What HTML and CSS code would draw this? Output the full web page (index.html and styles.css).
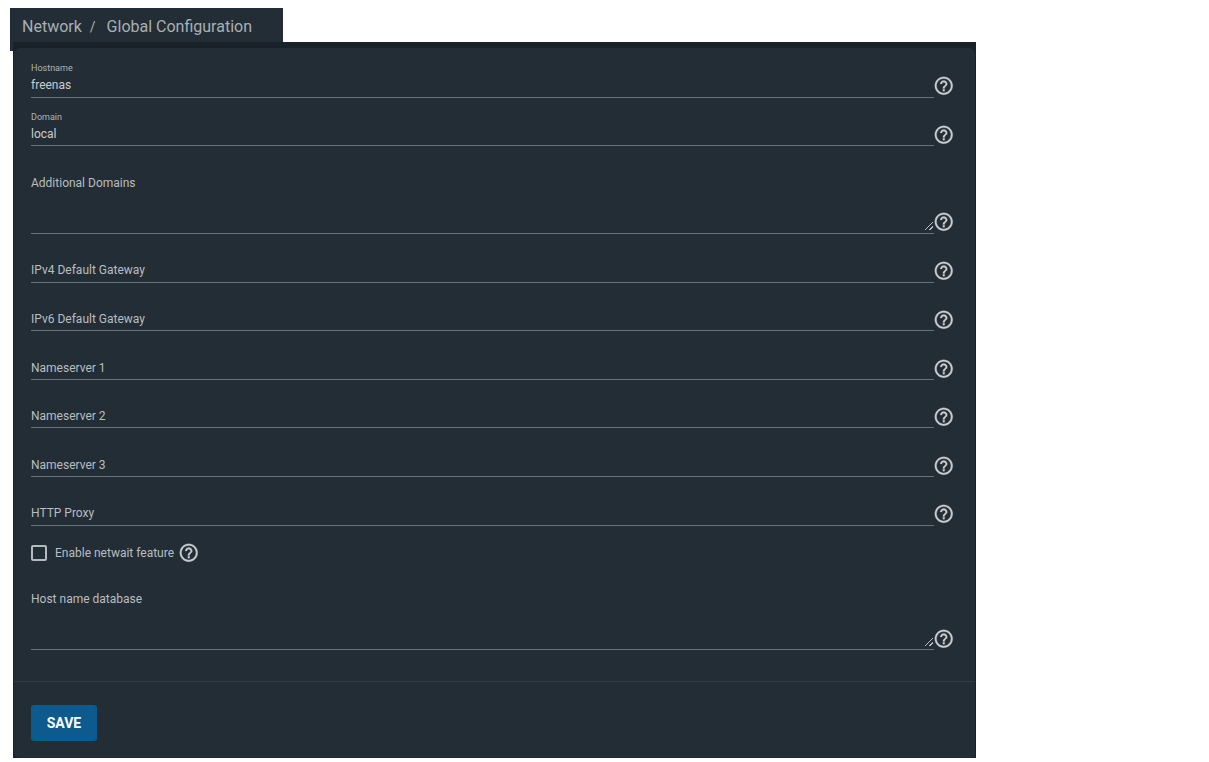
FILE: index.html
```html
<!DOCTYPE html>
<html lang="en">
<head>
<meta charset="utf-8">
<title>Global Configuration</title>
<link rel="stylesheet" href="styles.css">
</head>
<body>
<svg class="sprite" width="0" height="0" aria-hidden="true">
  <symbol id="help" viewBox="0 0 24 24"><path d="M11 18h2v-2h-2v2zm1-16C6.48 2 2 6.48 2 12s4.48 10 10 10 10-4.48 10-10S17.52 2 12 2zm0 18c-4.41 0-8-3.59-8-8s3.59-8 8-8 8 3.59 8 8-3.59 8-8 8zm0-14c-2.21 0-4 1.79-4 4h2c0-1.1.9-2 2-2s2 .9 2 2c0 2-3 1.75-3 5h2c0-2.25 3-2.5 3-5 0-2.21-1.79-4-4-4z"/></symbol>
</svg>
<nav class="crumbs"><span>Network</span><span class="sep">/</span><span>Global Configuration</span></nav>
<main class="shell">
  <form class="card">
    <div class="fields">
      <div class="row row-first">
        <div class="control"><div class="float">Hostname</div><div class="value">freenas</div></div>
        <svg class="help"><use href="#help"/></svg>
      </div>
      <div class="row row-second">
        <div class="control"><div class="float">Domain</div><div class="value">local</div></div>
        <svg class="help"><use href="#help"/></svg>
      </div>
      <div class="row row-area">
        <div class="control"><div class="label">Additional Domains</div><textarea class="area"></textarea></div>
        <svg class="help"><use href="#help"/></svg>
      </div>
      <div class="row"><div class="control"><div class="label">IPv4 Default Gateway</div></div><svg class="help"><use href="#help"/></svg></div>
      <div class="row"><div class="control"><div class="label">IPv6 Default Gateway</div></div><svg class="help"><use href="#help"/></svg></div>
      <div class="row"><div class="control"><div class="label">Nameserver 1</div></div><svg class="help"><use href="#help"/></svg></div>
      <div class="row"><div class="control"><div class="label">Nameserver 2</div></div><svg class="help"><use href="#help"/></svg></div>
      <div class="row"><div class="control"><div class="label">Nameserver 3</div></div><svg class="help"><use href="#help"/></svg></div>
      <div class="row"><div class="control"><div class="label">HTTP Proxy</div></div><svg class="help"><use href="#help"/></svg></div>
      <div class="check">
        <span class="box"></span><span class="label">Enable netwait feature</span><svg class="help"><use href="#help"/></svg>
      </div>
      <div class="row row-last">
        <div class="control"><div class="label">Host name database</div><textarea class="area"></textarea></div>
        <svg class="help"><use href="#help"/></svg>
      </div>
    </div>
    <div class="actions"><button class="save" type="button">SAVE</button></div>
  </form>
</main>
</body>
</html>
```
FILE: styles.css
```css
html, body { margin: 0; padding: 0; background: #fff; }
body { font-family: Roboto, "Liberation Sans", sans-serif; width: 1209px; height: 762px; overflow: hidden; padding-top: 8px; box-sizing: border-box; }
.sprite { position: absolute; }
.crumbs {
  width: 273px; height: 43px; margin-left: 10px; padding: 8px 0 0 12px; box-sizing: border-box;
  background: #232d35; color: #a9b0b4; font-size: 16px; line-height: 22px; display: flex;
}
.sep { margin: 0 11px 0 8px; font-size: 14px; }
.shell { width: 963px; height: 716px; margin: -9px 0 0 13px; padding: 6px 1px 0 1px; box-sizing: border-box; background: #1a2229; position: relative; }
.card { height: 710px; background: #232d35; border-radius: 6px 6px 0 6px; display: flex; flex-direction: column; }
.fields { flex: none; height: 633px; padding: 0 20.5px 0 17px; }
.row { height: 48.6px; display: flex; align-items: flex-end; }
.row-first { height: 49.5px; }
.row-second { height: 48.5px; }
.row-area { height: 88px; }
.control { flex: 1; height: 100%; border-bottom: 1px solid #6a7379; box-sizing: border-box; display: flex; flex-direction: column; justify-content: flex-end; min-width: 0; position: relative; }
.label { color: #b8bec1; font-size: 12px; line-height: 14px; padding-bottom: 4.2px; }
.float { color: #aeb4b8; font-size: 9px; line-height: 11px; margin-bottom: 1.1px; }
.value { color: #c9cdd0; font-size: 12px; line-height: 15px; padding: 3px 0 3.4px; }
.row-area .control, .row-last .control { justify-content: flex-start; }
.row-area .label { padding: 30px 0 0; }
.row-last .label { padding: 11px 0 0; }
.area { display: block; flex: none; width: 100%; height: 41px; margin: 0; padding: 0; border: 0; background: transparent; box-sizing: border-box; outline: 0; resize: none; }
.row-area .control::after, .row-last .control::after {
  content: ""; position: absolute; right: 1px; bottom: 3px; width: 8px; height: 8px;
  background: linear-gradient(135deg, transparent 44%, #b9bec1 44%, #b9bec1 56%, transparent 56%, transparent 72%, #b9bec1 72%, #b9bec1 84%, transparent 84%);
}
.row-last { height: 69.4px; }
.row-last .area { height: 42px; }
.help { flex: none; width: 21.5px; height: 21.5px; margin: 0 0 0.75px -1px; fill: #c9cdd0; stroke: #c9cdd0; stroke-width: 0.3; }
.row-area .help { margin-bottom: 1.25px; }
.row-last .help { margin-bottom: 0.25px; }
.check { height: 55px; display: flex; align-items: center; }
.box { width: 12px; height: 12px; border: 2px solid #b4babd; border-radius: 2px; margin-right: 8px; }
.check .label { padding: 0; }
.check .help { margin: 0 0 0 4px; }
.actions { border-top: 1px solid #323c44; padding: 23px 17px 0; }
.save { display: block; width: 66px; height: 36px; border: 0; border-radius: 3px; background: #0d5a8f; color: #fff; font: 700 14px Roboto, "Liberation Sans", sans-serif; padding: 0; }
```
